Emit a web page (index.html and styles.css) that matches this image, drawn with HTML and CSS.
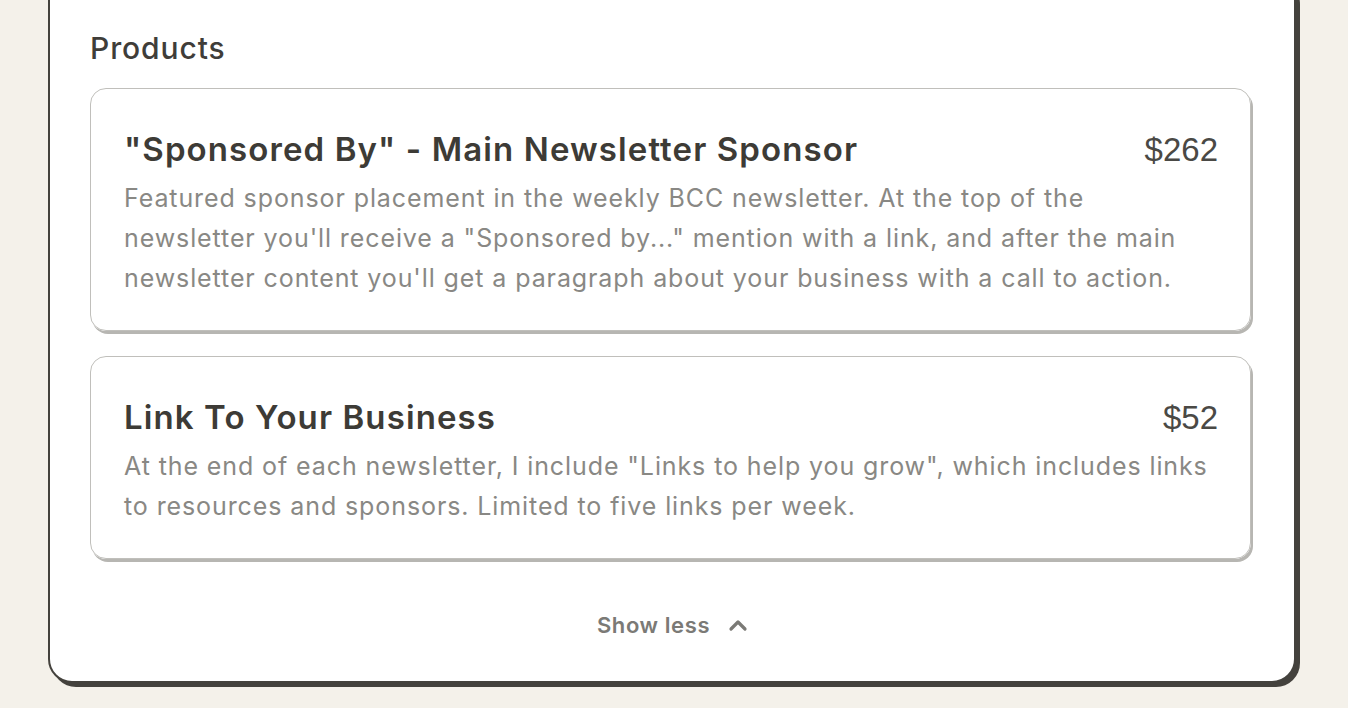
FILE: index.html
```html
<html>
  <head>
    <link rel="stylesheet" href="styles.css">
  </head>

  <body class="page">
    <div class="listing-card">
      <h2 class="section-title">Products</h2>

      <div class="product-list">
        <div class="product-card">
          <div class="product-header">
            <div class="product-name">"Sponsored By" - Main Newsletter Sponsor</div>
            <div class="product-price">$262</div>
          </div>
          <p class="product-description">Featured sponsor placement in the weekly BCC newsletter. At the top of the newsletter you'll receive a "Sponsored by..." mention with a link, and after the main newsletter content you'll get a paragraph about your business with a call to action.</p>
        </div>

        <div class="product-card">
          <div class="product-header">
            <div class="product-name">Link To Your Business</div>
            <div class="product-price">$52</div>
          </div>
          <p class="product-description">At the end of each newsletter, I include "Links to help you grow", which includes links to resources and sponsors. Limited to five links per week.</p>
        </div>
      </div>

      <div class="toggle-row">
        <button class="toggle-button" type="button">
          Show less
          <svg class="toggle-icon" width="20" height="14" viewBox="0 0 20 14" aria-hidden="true">
            <path d="M3 11 L10 4 L17 11" fill="none" stroke="currentColor" stroke-width="3.2" stroke-linecap="round" stroke-linejoin="round"/>
          </svg>
        </button>
      </div>
    </div>
  </body>
</html>
```

FILE: styles.css
```css
* {
  box-sizing: border-box;
}

.page {
  margin: 0;
  background: #f4f1ea;
  font-family: Inter, "Noto Sans", sans-serif;
  color: #3f3d39;
  overflow: hidden;
}

.listing-card {
  width: 1248px;
  margin: -24px 0 0 48px;
  padding: 40px 43px 40px 40px;
  background: #ffffff;
  border: 2px solid #44423d;
  border-radius: 24px;
  box-shadow: 4px 4px 0 #44423d;
}

.section-title {
  margin: 0;
  font-size: 30px;
  font-weight: 500;
  line-height: 60px;
  letter-spacing: 0.9px;
  color: #3f3d39;
}

.product-list {
  display: flex;
  flex-direction: column;
  gap: 25px;
  margin-top: 10px;
}

.product-card {
  border: 1px solid #c0bfbb;
  border-radius: 16px;
  padding: 32px 32px 32px 33px;
  box-shadow: 2px 3px 0 #b7b6b2;
}

.product-header {
  display: flex;
  justify-content: space-between;
  align-items: baseline;
  gap: 24px;
}

.product-name {
  font-size: 33px;
  font-weight: 600;
  line-height: 56px;
  letter-spacing: 1.1px;
  color: #3d3b36;
}

.product-price {
  font-family: "Liberation Sans", Arial, sans-serif;
  font-size: 33px;
  line-height: 56px;
  color: #4a4945;
}

.product-description {
  margin: 0;
  font-size: 25px;
  line-height: 40px;
  letter-spacing: 0.9px;
  color: #898884;
}

.toggle-row {
  display: flex;
  justify-content: center;
  margin-top: 50px;
}

.toggle-button {
  display: flex;
  align-items: center;
  gap: 18px;
  padding: 0 0 0 4px;
  border: none;
  background: none;
  font-family: inherit;
  font-size: 22px;
  font-weight: 600;
  line-height: 32px;
  letter-spacing: 0.6px;
  color: #7b7a76;
  cursor: pointer;
}

.toggle-icon {
  display: block;
}
```
